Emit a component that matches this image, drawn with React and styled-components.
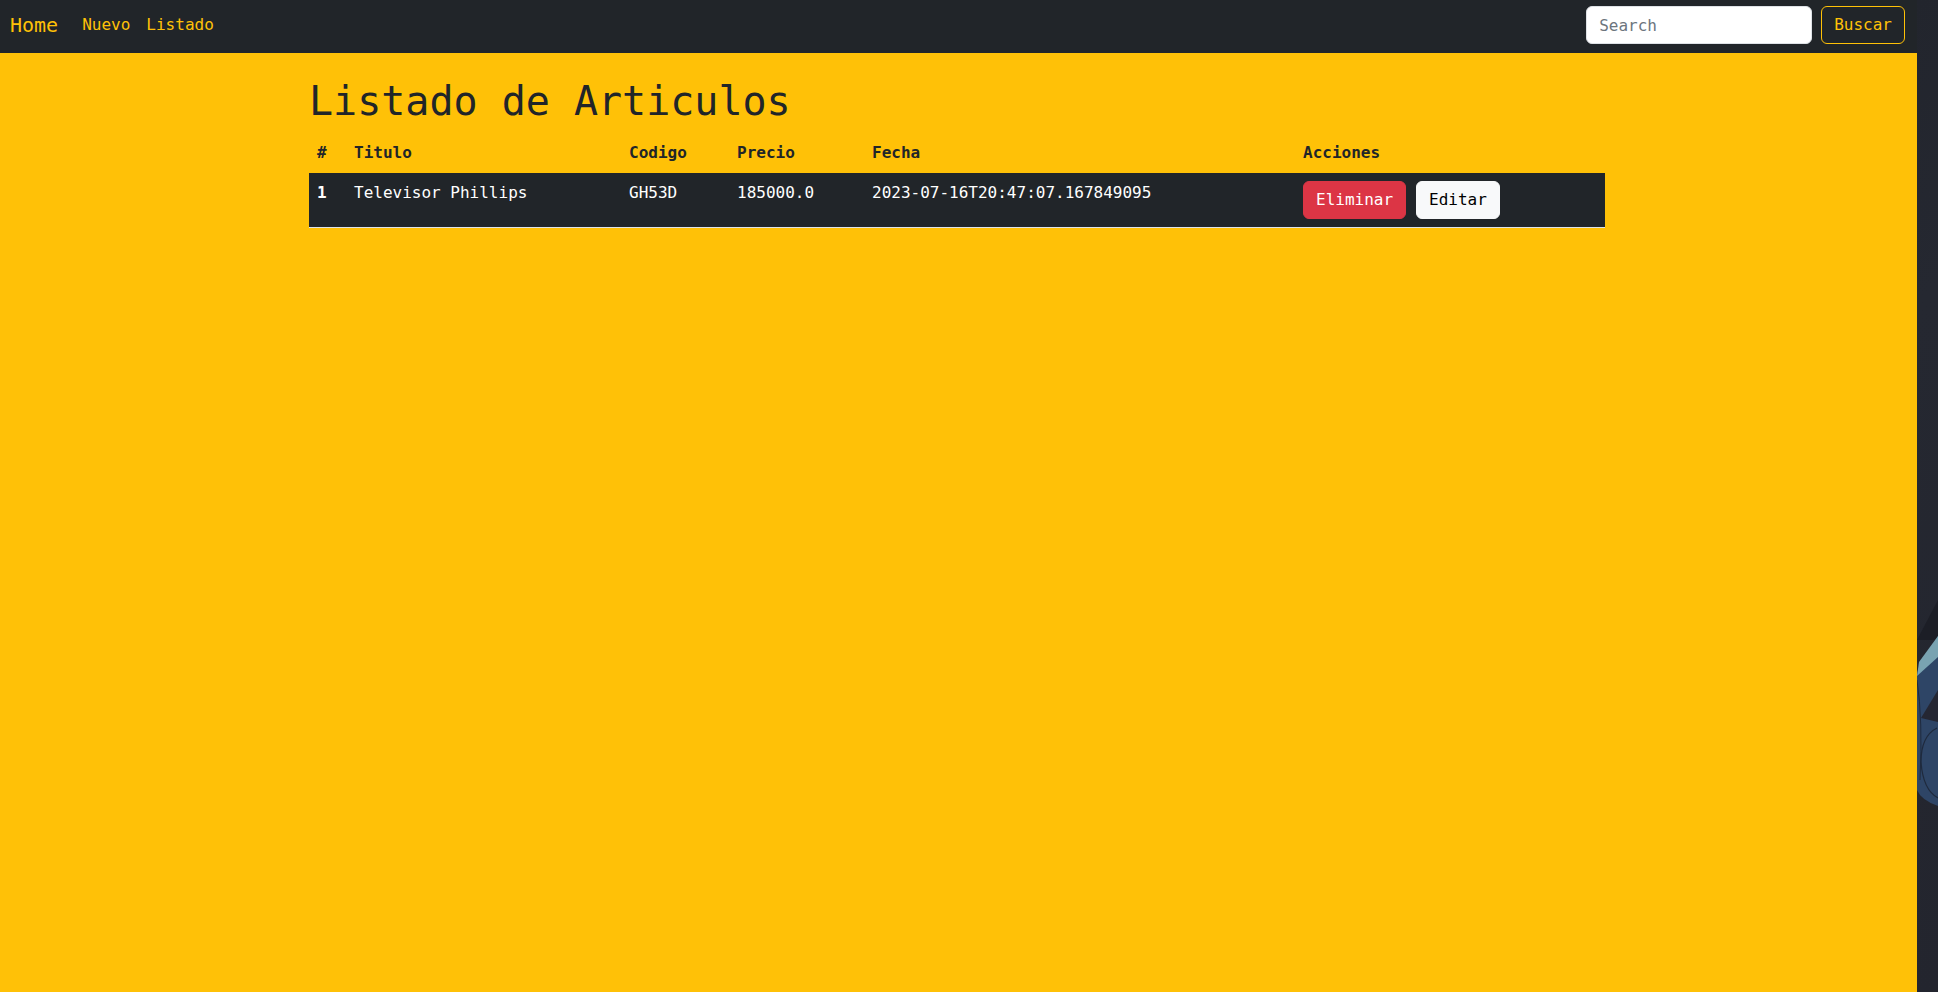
import styled, { createGlobalStyle } from "styled-components";

const GlobalStyle = createGlobalStyle`
  * { box-sizing: border-box; }
  body {
    margin: 0;
    background: #22252d;
    font-family: "DejaVu Sans Mono", "Liberation Mono", monospace;
    font-size: 16px;
    line-height: 1.5;
    color: #212529;
  }
`;

const Shell = styled.div`
  display: flex;
  min-height: 100vh;
`;

const Page = styled.div`
  flex: 0 0 1917px;
  display: flex;
  flex-direction: column;
  background: #ffc107;
`;

const Wallpaper = styled.div`
  flex: 1;
  background: linear-gradient(135deg, #22252d 0%, #252831 30%, #23252e 100%);
  overflow: hidden;
  svg { display: block; }
`;

const Navbar = styled.nav`
  height: 53px;
  background: #212529;
  display: flex;
  align-items: center;
  justify-content: space-between;
  padding: 6px 12px 9px 10px;
`;

const NavLeft = styled.div`
  display: flex;
  align-items: center;
`;

const Brand = styled.a`
  font-size: 20px;
  color: #ffc107;
  margin-right: 16px;
  text-decoration: none;
`;

const NavLink = styled.a`
  color: #ffc107;
  padding: 8px;
  text-decoration: none;
`;

const SearchForm = styled.form`
  display: flex;
  gap: 9px;
`;

const SearchInput = styled.input`
  width: 226px;
  height: 38px;
  padding: 6px 12px;
  font: inherit;
  color: #212529;
  background: #fff;
  border: 1px solid #dee2e6;
  border-radius: 6px;
  &::placeholder { color: #6c757d; }
`;

const Button = styled.button`
  font: inherit;
  height: 38px;
  padding: 6px 12px;
  border-radius: 6px;
  border: 1px solid ${(p) => p.$border};
  background: ${(p) => p.$bg};
  color: ${(p) => p.$fg};
  cursor: pointer;
`;

const Container = styled.main`
  width: 1320px;
  margin: 0 0 0 297px;
  padding: 24px 12px 0;
`;

const Title = styled.h1`
  margin: 0 0 8px;
  font-size: 40px;
  font-weight: 400;
  line-height: 1.2;
  color: #212529;
`;

const Table = styled.table`
  width: 100%;
  border-collapse: collapse;
`;

const HeadCell = styled.th`
  text-align: left;
  vertical-align: top;
  padding: 8px;
  font-weight: 700;
  width: ${(p) => p.$w}px;
`;

const Row = styled.tr`
  background: #212529;
  color: #fff;
  border-bottom: 1px solid #dee2e6;
`;

const Cell = styled.td`
  vertical-align: top;
  padding: 8px;
  font-weight: ${(p) => (p.$bold ? 700 : 400)};
`;

const Actions = styled.div`
  display: flex;
  gap: 10px;
`;

const columns = [
  { label: "#", w: 37 },
  { label: "Titulo", w: 275 },
  { label: "Codigo", w: 108 },
  { label: "Precio", w: 135 },
  { label: "Fecha", w: 431 },
  { label: "Acciones", w: 310 },
];

const articulos = [
  {
    id: 1,
    titulo: "Televisor Phillips",
    codigo: "GH53D",
    precio: "185000.0",
    fecha: "2023-07-16T20:47:07.167849095",
  },
];

export default function App() {
  return (
    <>
      <GlobalStyle />
      <Shell>
        <Page>
          <Navbar>
            <NavLeft>
              <Brand href="#">Home</Brand>
              <NavLink href="#">Nuevo</NavLink>
              <NavLink href="#">Listado</NavLink>
            </NavLeft>
            <SearchForm onSubmit={(e) => e.preventDefault()}>
              <SearchInput type="search" placeholder="Search" />
              <Button $bg="transparent" $fg="#ffc107" $border="#ffc107">
                Buscar
              </Button>
            </SearchForm>
          </Navbar>
          <Container>
            <Title>Listado de Articulos</Title>
            <Table>
              <thead>
                <tr>
                  {columns.map((c) => (
                    <HeadCell key={c.label} $w={c.w}>
                      {c.label}
                    </HeadCell>
                  ))}
                </tr>
              </thead>
              <tbody>
                {articulos.map((a) => (
                  <Row key={a.id}>
                    <Cell $bold>{a.id}</Cell>
                    <Cell>{a.titulo}</Cell>
                    <Cell>{a.codigo}</Cell>
                    <Cell>{a.precio}</Cell>
                    <Cell>{a.fecha}</Cell>
                    <Cell>
                      <Actions>
                        <Button $bg="#dc3545" $fg="#fff" $border="#dc3545">
                          Eliminar
                        </Button>
                        <Button $bg="#f8f9fa" $fg="#000" $border="#f8f9fa">
                          Editar
                        </Button>
                      </Actions>
                    </Cell>
                  </Row>
                ))}
              </tbody>
            </Table>
          </Container>
        </Page>
        <Wallpaper>
          <svg width="21" height="992" viewBox="0 0 21 992">
            <path d="M0 640 L21 600 L21 640 Z" fill="#1c1e26" />
            <path d="M2 668 Q0 672 0 676 L0 790 Q4 800 21 806 L21 636 Z" fill="#2e4566" />
            <path d="M2 662 L21 636 L21 657 L0 676 Z" fill="#79a3b1" />
            <path d="M21 690 L4 718 L21 722 Z" fill="#252733" />
            <path d="M20 728 Q4 736 4 762 Q6 790 21 798" fill="none" stroke="#1f2a3d" strokeWidth="1.2" />
            <path d="M0 680 Q6 720 3 780" fill="none" stroke="#1f2a3d" strokeWidth="1" />
          </svg>
        </Wallpaper>
      </Shell>
    </>
  );
}
